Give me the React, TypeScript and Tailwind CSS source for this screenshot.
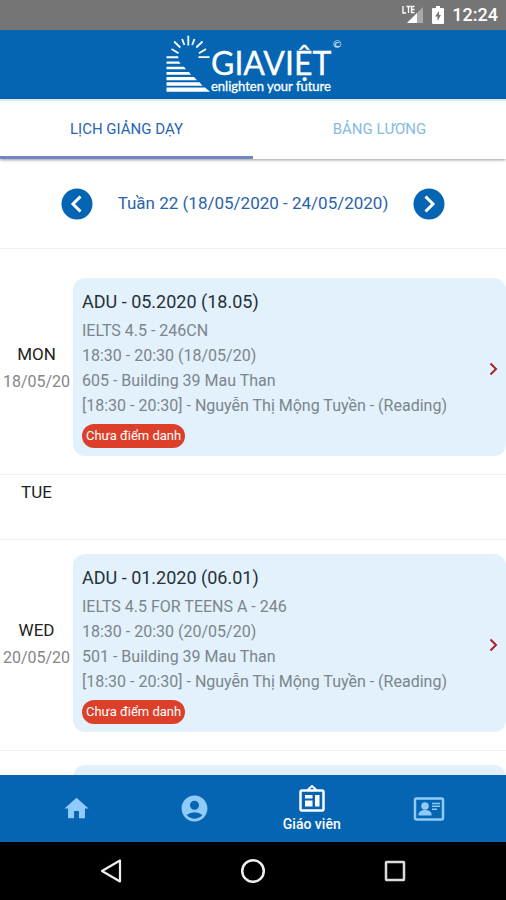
import React, { useState } from "react"
import clsx from "clsx"
import { MdAccountCircle, MdHome } from "react-icons/md"

type Lesson = {
  title: string
  course: string
  time: string
  room: string
  teacher: string
  status: string
}

type Day = {
  name: string
  date?: string
  lesson?: Lesson
}

const days: Day[] = [
  {
    name: "MON",
    date: "18/05/20",
    lesson: {
      title: "ADU - 05.2020 (18.05)",
      course: "IELTS 4.5 - 246CN",
      time: "18:30 - 20:30 (18/05/20)",
      room: "605 - Building 39 Mau Than",
      teacher: "[18:30 - 20:30] - Nguyễn Thị Mộng Tuyền - (Reading)",
      status: "Chưa điểm danh",
    },
  },
  { name: "TUE" },
  {
    name: "WED",
    date: "20/05/20",
    lesson: {
      title: "ADU - 01.2020 (06.01)",
      course: "IELTS 4.5 FOR TEENS A - 246",
      time: "18:30 - 20:30 (20/05/20)",
      room: "501 - Building 39 Mau Than",
      teacher: "[18:30 - 20:30] - Nguyễn Thị Mộng Tuyền - (Reading)",
      status: "Chưa điểm danh",
    },
  },
]

const tabs = ["LỊCH GIẢNG DẠY", "BẢNG LƯƠNG"]

const StatusBar = () => (
  <div className="flex h-[30px] shrink-0 items-center justify-end bg-[#757575] pr-2 text-white">
    <svg width="22" height="20" viewBox="0 0 22 20" className="mr-2">
      <path d="M21 2v16H5z" fill="#a9a9a9" />
      <path d="M15 8v10H5z" fill="#fff" />
      <path
        d="M1 1v7h3M4.500 1.500h4M6.500 1.500V8M12.500 1.500H9.500V7.500h3M9.500 4.500h3"
        fill="none"
        stroke="#fff"
        strokeWidth="1.300"
      />
    </svg>
    <svg width="12" height="18" viewBox="0 0 12 18" className="mr-2">
      <path d="M4 0h4v2h3a1 1 0 0 1 1 1v14a1 1 0 0 1-1 1H1a1 1 0 0 1-1-1V3a1 1 0 0 1 1-1h3z" fill="#fff" />
      <path d="M7 5 3 10.500h2.500V15L9 9H7z" fill="#757575" />
    </svg>
    <span className="text-lg font-medium">12:24</span>
  </div>
)

const Logo = () => (
  <svg
    width="180"
    height="62"
    viewBox="0 0 180 62"
    fill="#fff"
    fontFamily="Lato, 'Open Sans', sans-serif"
    role="img"
    aria-label="GIAVIỆT"
  >
    {/* sun rays */}
    <path
      d="M25.300 1.800v9.700M31.500 5l-2.300 6M39.500 7.500l-6.200 6M43 15l-7 4.200M46.500 23.200H35.500M19.100 5l2.300 6M11.100 7.500l6.200 6M8.500 15l7 4.200"
      stroke="#fff"
      strokeWidth="1.800"
    />
    {/* steps */}
    <path d="M3.500 22.300H15l.5 1.900h-12zM3.500 27.600H16l1.500 2.200h-14zM3.500 32.800H21l2 2.500H3.500zM3.500 37.900H26l2 2.800H3.500zM3.500 43H31l3 3.200H3.500zM3.500 48.200H36.500l3 3.500h-36zM3.500 53.500H42l5 4.200H3.500z" />
    <text x="48" y="41" fontSize="32" stroke="#fff" strokeWidth="0.300">
      GIAVIỆT
    </text>
    <text x="48" y="57" fontSize="13" stroke="#fff" strokeWidth="0.300">
      enlighten your future
    </text>
    <text x="170" y="14" fontSize="10">
      ©
    </text>
  </svg>
)

const ArrowCircle = ({ flipped }: { flipped?: boolean }) => (
  <svg width="32" height="32" viewBox="0 0 32 32" className={clsx(flipped && "rotate-180")}>
    <circle cx="16" cy="16" r="15.500" fill="#0565b3" />
    <path d="M19.500 8.500 12 16l7.500 7.500" fill="none" stroke="#fff" strokeWidth="3" />
  </svg>
)

const LessonCard = ({ lesson }: { lesson: Lesson }) => (
  <button
    type="button"
    className="flex w-full items-center justify-between rounded-xl bg-[#e2f1fb] pt-3 pr-2 pb-2 pl-[9px] text-left"
  >
    <span className="flex flex-col items-start text-base leading-[25px] text-[#7b858b]">
      <span className="mb-1 text-lg leading-6 text-[#263038]">{lesson.title}</span>
      <span>{lesson.course}</span>
      <span>{lesson.time}</span>
      <span>{lesson.room}</span>
      <span>{lesson.teacher}</span>
      <span className="mt-1.5 rounded-full bg-[#dc402b] px-1 text-[13px] leading-6 text-white">
        {lesson.status}
      </span>
    </span>
    <svg width="9" height="14" viewBox="0 0 9 14" className="shrink-0">
      <path d="m1.500 1.500 5.500 5.500-5.500 5.500" fill="none" stroke="#a82228" strokeWidth="2" />
    </svg>
  </button>
)

const DayRow = ({ day }: { day: Day }) => (
  <li className="flex items-center border-b border-[#f1f1f1]">
    <div className="w-[73px] shrink-0 pt-1 pb-1.5 text-center">
      <p className="h-[27px] text-[17px] leading-[27px] text-[#222]">{day.name}</p>
      <p className="h-[27px] text-base leading-[27px] text-[#868686]">{day.date}</p>
    </div>
    {day.lesson && (
      <div className="min-w-0 grow pt-3.5 pb-[18px]">
        <LessonCard lesson={day.lesson} />
      </div>
    )}
  </li>
)

const TeacherIcon = () => (
  <svg width="28" height="28" viewBox="0 0 28 28" fill="none" stroke="currentColor">
    <path d="M9.500 6 14 2l4.500 4" strokeWidth="2" />
    <rect x="2.500" y="6.500" width="23" height="20" rx="1.500" strokeWidth="2.500" />
    <path d="M7 11h7.500v3.500H7zM7 16.500h7.500v6H7zM17 11h4.500v11.500H17z" fill="currentColor" stroke="none" />
  </svg>
)

const ContactCardIcon = () => (
  <svg width="32" height="24" viewBox="0 0 32 24" fill="currentColor">
    <rect x="2" y="1.500" width="28" height="21" rx="1.500" fill="none" stroke="currentColor" strokeWidth="2.500" />
    <circle cx="12" cy="9" r="3.800" />
    <path d="M5.500 18.500V17c0-2.500 3.500-4 6.500-4s6.500 1.500 6.500 4v1.500z" />
    <path d="M19 5.800h8v1.500h-8zM19 8.600h8v1.500h-8zM19 11.400h5v1.500h-5z" />
  </svg>
)

const BottomNav = () => (
  <nav className="flex h-[67px] shrink-0 items-center justify-center bg-[#0565b3] px-[18px] text-[#8fcaf9]">
    <a href="#home" aria-label="Home" className="flex flex-1 justify-center">
      <MdHome size={29} />
    </a>
    <a href="#account" aria-label="Account" className="flex flex-1 justify-center">
      <MdAccountCircle size={31} />
    </a>
    <a href="#teacher" className="flex flex-1 flex-col items-center text-white">
      <TeacherIcon />
      <span className="pt-0.5 text-sm leading-5 font-medium">Giáo viên</span>
    </a>
    <a href="#contact" aria-label="Contact" className="flex flex-1 justify-center">
      <ContactCardIcon />
    </a>
  </nav>
)

const SystemNav = () => (
  <div className="flex h-[58px] shrink-0 items-center justify-center bg-black px-10">
    <button type="button" aria-label="Back" className="flex flex-1 justify-center">
      <svg width="24" height="26" viewBox="0 0 24 26" fill="none" stroke="#eee" strokeWidth="2.200">
        <path d="M21 2.500v21L3 13z" strokeLinejoin="round" />
      </svg>
    </button>
    <button type="button" aria-label="Home screen" className="flex flex-1 justify-center">
      <svg width="26" height="26" viewBox="0 0 26 26" fill="none" stroke="#eee" strokeWidth="2.500">
        <circle cx="13" cy="13" r="10.800" />
      </svg>
    </button>
    <button type="button" aria-label="Recent apps" className="flex flex-1 justify-center">
      <svg width="22" height="22" viewBox="0 0 22 22" fill="none" stroke="#ddd" strokeWidth="2.500">
        <rect x="2" y="2" width="18" height="18" rx="0.500" />
      </svg>
    </button>
  </div>
)

const App = () => {
  const [activeTab, setActiveTab] = useState(0)

  return (
    <div className="flex h-screen flex-col overflow-hidden bg-white font-[Roboto,'Noto_Sans',sans-serif]">
      <StatusBar />
      <header className="flex h-[69px] shrink-0 items-center justify-center bg-[#0565b3]">
        <Logo />
      </header>
      <div role="tablist" className="z-10 flex h-[60px] shrink-0 border-t-2 border-[#dfe9f0] shadow-[0_1px_3px_rgba(0,0,0,0.4)]">
        {tabs.map((tab, i) => (
          <button
            key={tab}
            type="button"
            role="tab"
            aria-selected={i === activeTab}
            onClick={() => setActiveTab(i)}
            className={clsx(
              "flex-1 border-b-3 pt-0.5 text-[15px]",
              i === activeTab
                ? "border-[#7088bf] text-[#2765b0]"
                : "border-transparent text-[#86bbe0]"
            )}
          >
            {tab}
          </button>
        ))}
      </div>
      <div className="flex h-[90px] shrink-0 items-center justify-center gap-[25px] border-b border-[#f1f1f1]">
        <button type="button" aria-label="Previous week">
          <ArrowCircle />
        </button>
        <h1 className="text-[17px] text-[#2b62ad]">Tuần 22 (18/05/2020 - 24/05/2020)</h1>
        <button type="button" aria-label="Next week">
          <ArrowCircle flipped />
        </button>
      </div>
      <main className="min-h-0 flex-1 overflow-hidden">
        <ul className="pt-[15px]">
          {days.map((day) => (
            <DayRow key={day.name} day={day} />
          ))}
          <li className="pt-3.5 pl-[73px]">
            <div className="h-11 rounded-xl bg-[#e2f1fb]" />
          </li>
        </ul>
      </main>
      <BottomNav />
      <SystemNav />
    </div>
  )
}

export default App
